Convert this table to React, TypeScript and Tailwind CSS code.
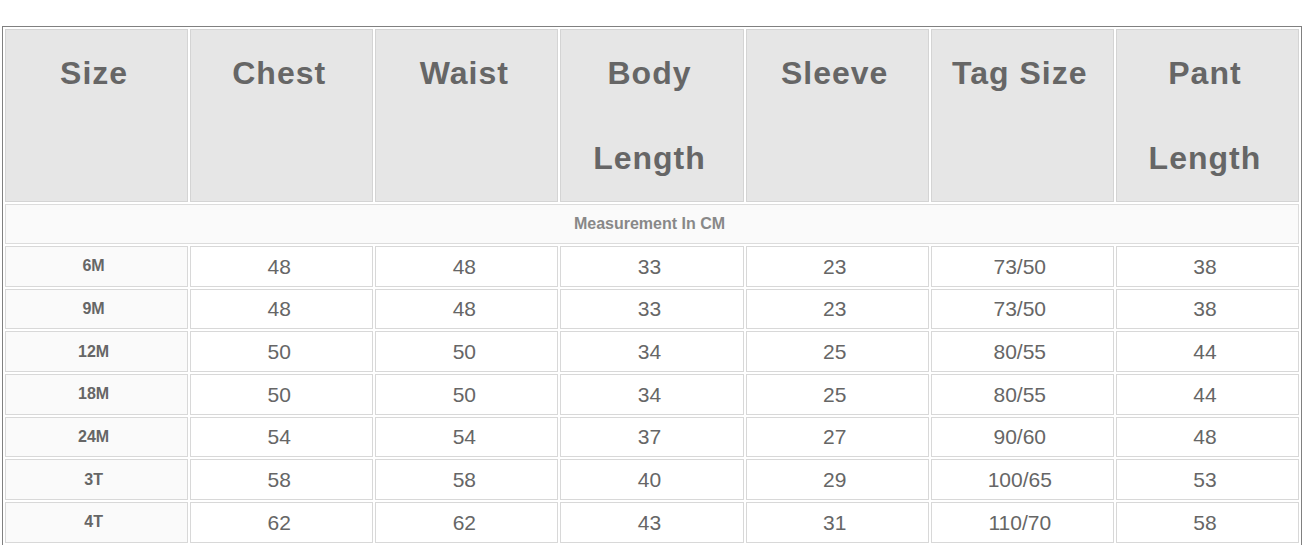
const HEADERS = ['Size', 'Chest', 'Waist', 'Body Length', 'Sleeve', 'Tag Size', 'Pant Length'];

const ROWS: string[][] = [
  ['6M', '48', '48', '33', '23', '73/50', '38'],
  ['9M', '48', '48', '33', '23', '73/50', '38'],
  ['12M', '50', '50', '34', '25', '80/55', '44'],
  ['18M', '50', '50', '34', '25', '80/55', '44'],
  ['24M', '54', '54', '37', '27', '90/60', '48'],
  ['3T', '58', '58', '40', '29', '100/65', '53'],
  ['4T', '62', '62', '43', '31', '110/70', '58'],
];

export default function App() {
  return (
    <div className="bg-white w-[1303px] h-[545px] overflow-hidden pt-[26px] pl-[2px] font-['Liberation_Sans',Arial,sans-serif]">
      <table className="w-[1300px] table-fixed border-separate border-spacing-[2px] border border-[#808080] text-[#666]">
        <thead>
          <tr>
            {HEADERS.map((h) => (
              <th
                key={h}
                className="h-[173px] align-top border border-[#d4d4d4] bg-[#e6e6e6] pl-0 pr-[5px] pt-[1px] text-[32px] font-bold leading-[85px] tracking-[1px]"
              >
                {h}
              </th>
            ))}
          </tr>
        </thead>
        <tbody>
          <tr>
            <td
              colSpan={7}
              className="h-[40px] border border-[#dcdcdc] bg-[#fafafa] pr-[5px] text-center text-[16px] font-bold text-[#888]"
            >
              Measurement In CM
            </td>
          </tr>
          {ROWS.map((row) => (
            <tr key={row[0]}>
              {row.map((cell, i) => (
                <td
                  key={i}
                  className={
                    i === 0
                      ? 'h-[40.7px] border border-[#d8d8d8] bg-[#fafafa] pl-0 pr-[6px] text-center text-[16px] font-bold'
                      : 'h-[40.7px] border border-[#d8d8d8] bg-white pl-0 pr-[5px] text-center text-[21px]'
                  }
                >
                  {cell}
                </td>
              ))}
            </tr>
          ))}
        </tbody>
      </table>
    </div>
  );
}
